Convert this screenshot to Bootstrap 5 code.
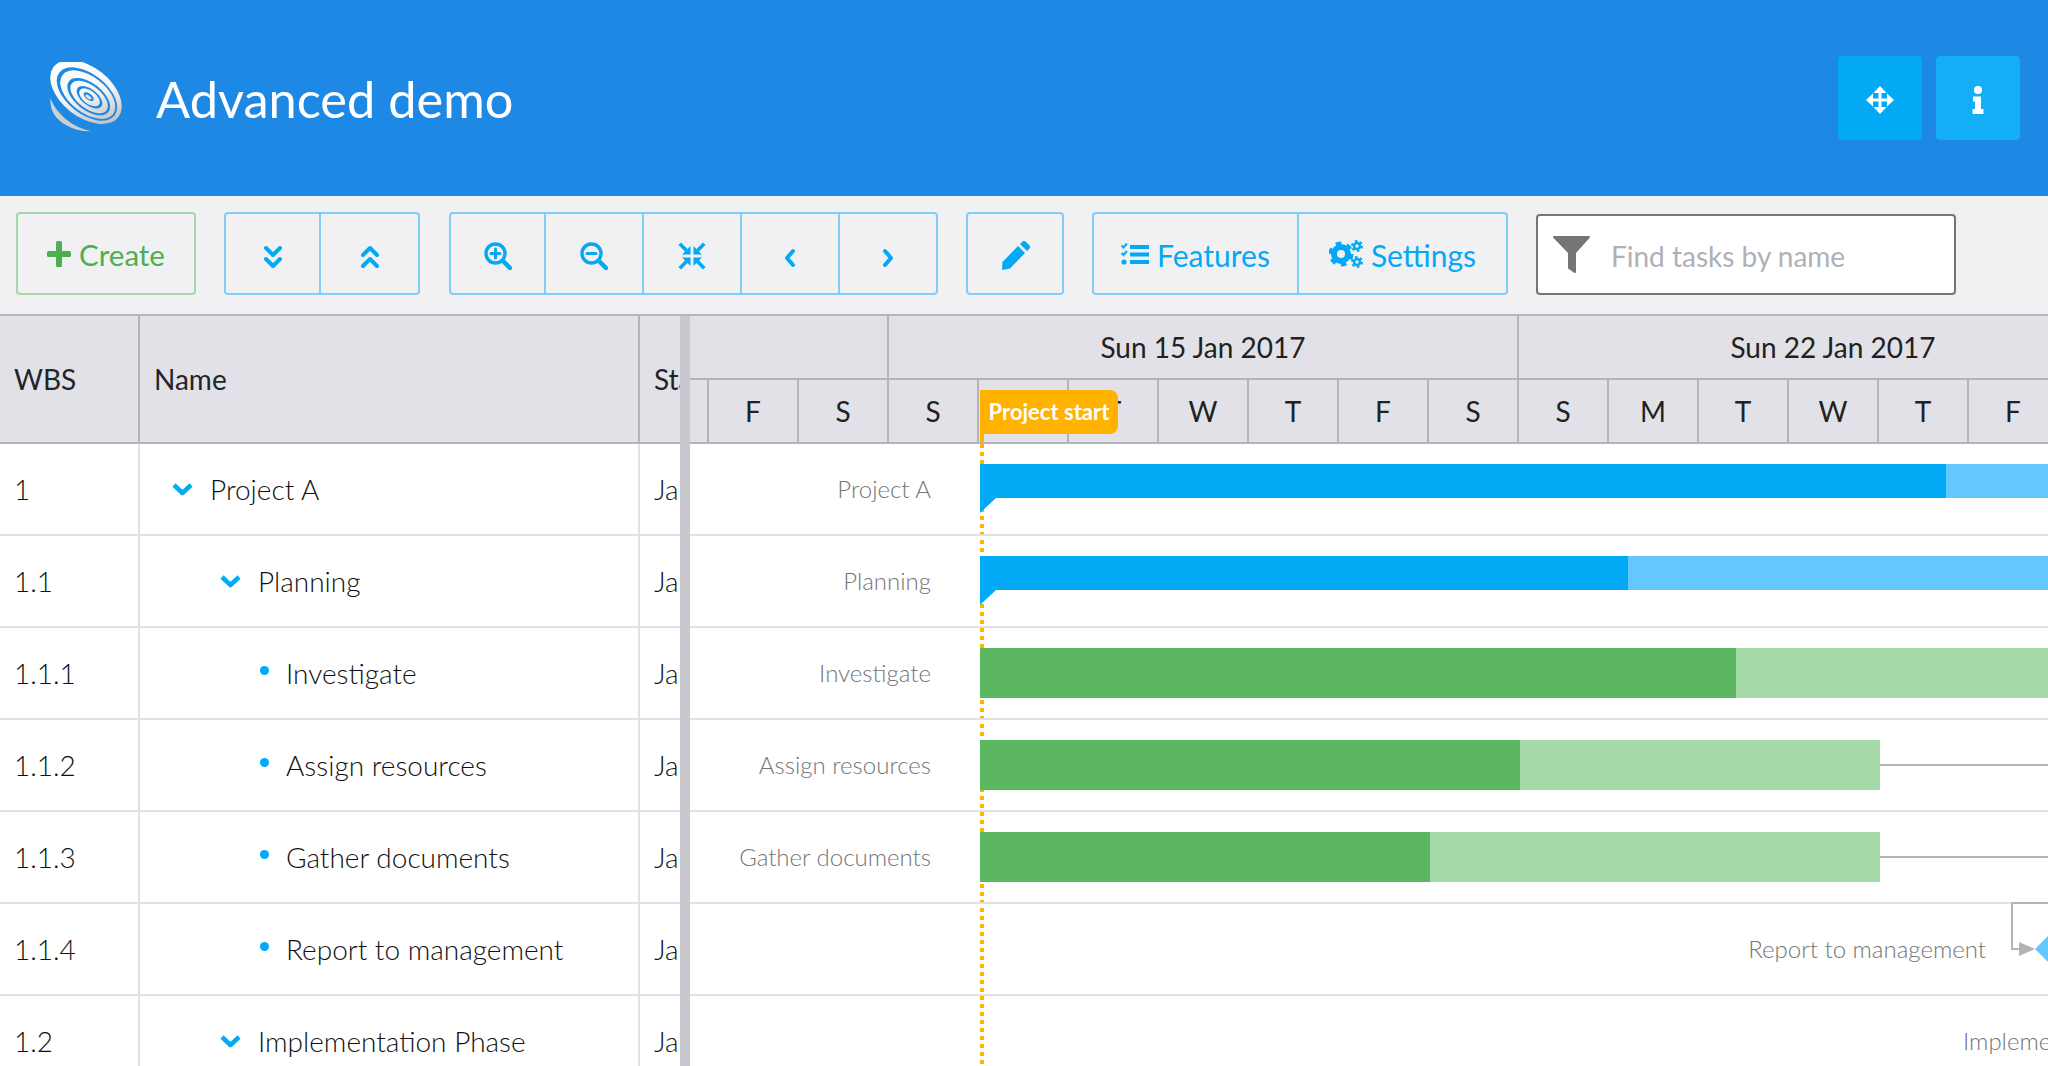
<!DOCTYPE html>
<html lang="en">

<head>
    <meta charset="UTF-8">
    <meta name="viewport" content="width=device-width, initial-scale=1.0">
    <title>Advanced demo</title>
    <link rel="stylesheet" href="https://cdn.jsdelivr.net/npm/bootstrap@5.3.0/dist/css/bootstrap.min.css">
    <style>
        html, body {
            height: 100%;
            overflow: hidden;
        }

        body {
            font-family: Lato, "Liberation Sans", sans-serif;
            color: #212121;
            background: #fff;
        }

        /* page header */
        .demo-head {
            height: 196px;
            background: #1e88e5;
            padding: 0 28px 0 50px;
        }

        .demo-title {
            font-size: 50.5px;
            font-weight: 400;
            color: #fff;
            margin: 2px 0 0 34px;
            line-height: 1;
        }

        .head-actions {
            gap: 14px;
        }

        .head-btn {
            width: 84px;
            height: 84px;
            padding: 3px 0 0;
            background: #03a9f4;
            border: 0;
            border-radius: 4px;
        }

        .head-btn + .head-btn {
            background: #13aef6;
        }

        /* toolbar */
        .tool-strip {
            height: 118px;
            background: #f1f1f4;
            padding: 16px 0 0 16px;
        }

        .btn-group {
            --bs-border-width: 0px;
        }

        .tool-btn {
            height: 83px;
            padding: 0;
            font-size: 30px;
            line-height: 1;
            color: #03a9f4;
            background: transparent;
            border: 2px solid #81cdf8;
            border-radius: 4px;
        }

        .btn-group > .tool-btn:not(:first-child) {
            border-left-width: 0;
        }

        .tool-btn:hover {
            color: #03a9f4;
            background: transparent;
            border-color: #81cdf8;
        }

        .tool-txt {
            padding-top: 2px;
        }

        .w-create { width: 180px; margin-right: 28px; color: #4caf50; border-color: #a5d6a7; font-size: 29.5px; }
        .w-create:hover { color: #4caf50; border-color: #a5d6a7; }
        .w-square { width: 98px; }
        .w-first { width: 97px; }
        .w-last { width: 99px; }
        .w-features { width: 207px; }
        .w-settings { width: 209px; }
        .gap-a { margin-right: 29px; }
        .gap-c { margin-right: 28px; }

        .filter-box {
            width: 420px;
            height: 81px;
            margin: 2px 0 0 28px;
            background: #fff;
            border: 2px solid #757575;
            border-radius: 4px;
            padding-left: 15px;
        }

        .filter-box input {
            border: 0;
            outline: 0;
            flex: 1;
            min-width: 0;
            margin-left: 21px;
            padding: 2px 0 0;
            font-size: 28px;
            font-family: inherit;
            color: #212121;
        }

        .filter-box input::placeholder {
            color: #b0b0b8;
            opacity: 1;
        }

        /* gantt */
        .gantt-wrap {
            height: 752px;
            border-top: 2px solid #b4b4ba;
            overflow: hidden;
        }

        .grid-pane {
            width: 680px;
            flex: none;
            overflow: hidden;
        }

        .split-bar {
            width: 10px;
            flex: none;
            background: #c8c8ce;
        }

        .time-pane {
            flex: 1;
            min-width: 0;
            overflow: hidden;
        }

        .tree-table {
            width: 800px;
            table-layout: fixed;
            margin: 0;
            border-collapse: separate;
            border-spacing: 0;
            --bs-table-bg: transparent;
        }

        .col-wbs { width: 140px; }
        .col-title { width: 500px; }
        .col-start { width: 160px; }

        .tree-table th,
        .tree-table td {
            padding: 0 0 0 14px;
            white-space: nowrap;
            overflow: hidden;
            font-size: 28px;
            vertical-align: middle;
            box-sizing: border-box;
            border: 0;
        }

        .tree-table th {
            height: 128px;
            background: #e1e1e7;
            font-weight: 400;
            border-right: 2px solid #b4b4ba;
            border-bottom: 2px solid #b4b4ba;
        }

        .tree-table td {
            height: 92px;
            font-weight: 300;
            color: #111;
            border-right: 2px solid #e1e1e7;
            border-bottom: 2px solid #e1e1e7;
        }

        .cell-name {
            display: flex;
            align-items: center;
        }

        .tree-table td.lvl-0 { padding-left: 32px; }
        .tree-table td.lvl-1 { padding-left: 80px; }
        .tree-table td.lvl-2 { padding-left: 120px; }

        .tree-dot {
            width: 9px;
            height: 9px;
            border-radius: 50%;
            background: #03a9f4;
            margin: -6px 17px 0 0;
            flex: none;
        }

        .tree-arrow {
            margin-right: 17px;
            flex: none;
        }

        /* timeline head */
        .scale-row {
            display: flex;
            background: #e1e1e7;
            width: 1500px;
        }

        .scale-top {
            height: 64px;
            border-bottom: 2px solid #b4b4ba;
        }

        .scale-days {
            height: 64px;
            border-bottom: 2px solid #b4b4ba;
        }

        .scale-cell {
            flex: none;
            display: flex;
            align-items: center;
            justify-content: center;
            font-size: 28px;
            border-right: 2px solid #b4b4ba;
            box-sizing: border-box;
        }

        .w-stub-top { width: 199px; }
        .w-week { width: 630px; }
        .w-stub-day { width: 19px; }
        .w-day { width: 90px; }

        .time-body {
            position: relative;
        }

        .time-row {
            position: relative;
            height: 92px;
            border-bottom: 2px solid #e1e1e7;
            box-sizing: border-box;
        }

        .task-label {
            position: absolute;
            top: 0;
            height: 90px;
            display: flex;
            align-items: center;
            font-size: 24px;
            font-weight: 300;
            color: #757575;
            white-space: nowrap;
        }

        .task-bar {
            position: absolute;
            top: 20px;
            height: 34px;
            display: flex;
        }

        .bar-leaf {
            height: 50px;
        }

        .bar-done, .bar-rest {
            height: 100%;
            flex: none;
        }

        .tone-blue .bar-done { background: #03a9f4; }
        .tone-blue .bar-rest { background: #62c8fd; }
        .tone-green .bar-done { background: #5cb860; }
        .tone-green .bar-rest { background: #a5d9a7; }

        .bar-notch {
            position: absolute;
            left: 0;
            top: 34px;
        }

        .link-line {
            position: absolute;
            height: 2px;
            background: #b4b4b4;
        }

        .link-shape {
            position: absolute;
            left: 0;
            top: 0;
            overflow: visible;
        }

        .project-line {
            position: absolute;
            left: 290px;
            top: 0;
            bottom: 0;
            width: 4px;
            background: repeating-linear-gradient(to bottom, #ffb300 0 4px, transparent 4px 8px);
        }

        .project-flag {
            position: absolute;
            left: 290px;
            top: 74px;
            width: 138px;
            height: 44px;
            background: #ffb300;
            color: #fff;
            font-size: 22px;
            font-weight: 700;
            line-height: 44px;
            text-align: center;
            white-space: nowrap;
            border-radius: 0 8px 8px 0;
        }

        /* stem of the flag, down to the grid line */
        .project-flag::after {
            content: "";
            position: absolute;
            left: 0;
            top: 44px;
            width: 4px;
            height: 8px;
            background: #ffb300;
        }

        .time-pane-inner {
            position: relative;
        }
    </style>
</head>

<body>
    <header class="demo-head d-flex align-items-center">
        <svg width="72" height="72" viewBox="0 0 72 72">
            <defs>
                <linearGradient id="logoFill" gradientUnits="userSpaceOnUse" x1="10" y1="5" x2="70" y2="45">
                    <stop offset="0" stop-color="#ffffff" />
                    <stop offset="0.55" stop-color="#f4f4f4" />
                    <stop offset="1" stop-color="#c0c0c0" />
                </linearGradient>
            </defs>
            <path d="M0.500 36C5 50 22 66 41 69 30 70 16 66 6 55 2 50 0 44 0.500 36z" fill="#cfcfcf" />
            <g transform="rotate(38 36 30)">
                <ellipse cx="36" cy="30" rx="41" ry="25" fill="url(#logoFill)" />
                <ellipse cx="38" cy="31" rx="35" ry="20" fill="#1e88e5" />
                <ellipse cx="39" cy="31" rx="32" ry="18" fill="url(#logoFill)" />
                <ellipse cx="41" cy="32" rx="25" ry="13.500" fill="#1e88e5" />
                <ellipse cx="41.500" cy="32" rx="22" ry="11.500" fill="url(#logoFill)" />
                <ellipse cx="42" cy="32" rx="15" ry="8" fill="#1e88e5" />
                <ellipse cx="42" cy="32" rx="12" ry="6.500" fill="url(#logoFill)" />
                <ellipse cx="41" cy="32" rx="6" ry="3" fill="#1e88e5" />
                <ellipse cx="41" cy="32.500" rx="3.500" ry="1.500" fill="#e4e4e4" />
            </g>
        </svg>
        <h1 class="demo-title">Advanced demo</h1>
        <div class="ms-auto d-flex head-actions">
            <button class="head-btn d-flex align-items-center justify-content-center" type="button" aria-label="Move">
                <svg width="28" height="28" viewBox="0 0 28 28" fill="#fff">
                    <path d="M14 0l6.500 7H15.500v5.500H21V7.500l7 6.500-7 6.500V15.500H15.500V21h5L14 28l-6.500-7h5V15.500H7v5L0 14l7-6.500v5h5.500V7h-5z" />
                </svg>
            </button>
            <button class="head-btn d-flex align-items-center justify-content-center" type="button" aria-label="Info">
                <svg width="12" height="28" viewBox="0 0 12 28" fill="#fff">
                    <circle cx="6" cy="4" r="4" />
                    <path d="M1 10.500h8v12.500h2.500v5H0.500v-5H3v-7.500H1z" />
                </svg>
            </button>
        </div>
    </header>

    <div class="tool-strip d-flex align-items-start">
        <button class="btn tool-btn w-create d-flex align-items-center justify-content-center" type="button">
            <svg class="me-2" width="24" height="28" viewBox="0 0 24 28" fill="#4caf50">
                <rect x="9" y="1" width="6" height="26" rx="1.500" />
                <rect x="0" y="11" width="24" height="6" rx="1.500" />
            </svg>
            <span class="tool-txt">Create</span>
        </button>

        <div class="btn-group gap-a">
            <button class="btn tool-btn w-first" type="button" aria-label="Expand all">
                <svg width="18" height="24" viewBox="0 0 18 24" fill="none" stroke="#03a9f4" stroke-width="4" stroke-linecap="round" stroke-linejoin="round">
                    <path d="M2 3l7 7 7-7M2 14l7 7 7-7" />
                </svg>
            </button>
            <button class="btn tool-btn w-last" type="button" aria-label="Collapse all">
                <svg width="18" height="24" viewBox="0 0 18 24" fill="none" stroke="#03a9f4" stroke-width="4" stroke-linecap="round" stroke-linejoin="round">
                    <path d="M2 10l7-7 7 7M2 21l7-7 7 7" />
                </svg>
            </button>
        </div>

        <div class="btn-group gap-c">
            <button class="btn tool-btn w-first" type="button" aria-label="Zoom in">
                <svg width="28" height="28" viewBox="0 0 28 28" fill="none" stroke="#03a9f4" stroke-width="3.500" stroke-linecap="round">
                    <circle cx="11.500" cy="11.500" r="9.500" />
                    <path d="M19 19l7 7" stroke-width="4.500" />
                    <path d="M7 11.500h9M11.500 7v9" stroke-width="3" />
                </svg>
            </button>
            <button class="btn tool-btn w-square" type="button" aria-label="Zoom out">
                <svg width="28" height="28" viewBox="0 0 28 28" fill="none" stroke="#03a9f4" stroke-width="3.500" stroke-linecap="round">
                    <circle cx="11.500" cy="11.500" r="9.500" />
                    <path d="M19 19l7 7" stroke-width="4.500" />
                    <path d="M7 11.500h9" stroke-width="3" />
                </svg>
            </button>
            <button class="btn tool-btn w-square" type="button" aria-label="Fit">
                <svg width="28" height="28" viewBox="0 0 28 28" fill="#03a9f4">
                    <path d="M12.500 12.500H4l3-3L0.500 3 3 0.500 9.500 7l3-3zM15.500 12.500H24l-3-3L27.500 3 25 0.500 18.500 7l-3-3zM12.500 15.500H4l3 3L0.500 25 3 27.500 9.500 21l3 3zM15.500 15.500H24l-3 3L27.500 25 25 27.500 18.500 21l-3 3z" />
                </svg>
            </button>
            <button class="btn tool-btn w-square" type="button" aria-label="Previous">
                <svg width="12" height="20" viewBox="0 0 12 20" fill="none" stroke="#03a9f4" stroke-width="4" stroke-linecap="round" stroke-linejoin="round">
                    <path d="M9 3l-6 7 6 7" />
                </svg>
            </button>
            <button class="btn tool-btn w-square" type="button" aria-label="Next">
                <svg width="12" height="20" viewBox="0 0 12 20" fill="none" stroke="#03a9f4" stroke-width="4" stroke-linecap="round" stroke-linejoin="round">
                    <path d="M3 3l6 7-6 7" />
                </svg>
            </button>
        </div>

        <button class="btn tool-btn w-square gap-c" type="button" aria-label="Edit">
            <svg width="29" height="29" viewBox="0 0 29 29" fill="#03a9f4">
                <path d="M17 5l7 7L9 27.500 1 29l0.500-8zM19 3l2.500-2.500c1-1 2-1 3 0l4 4c1 1 1 2 0 3L26 10z" />
            </svg>
        </button>

        <div class="btn-group">
            <button class="btn tool-btn w-features d-flex align-items-center justify-content-center" type="button">
                <svg class="me-2" width="28" height="24" viewBox="0 0 28 24" fill="#03a9f4">
                    <path d="M9 3h19v4H9zM9 10.500h19v4H9zM9 18h19v4H9z" />
                    <path d="M0.500 3.500l2 2L6 1.500M0.500 11l2 2L6 9" fill="none" stroke="#03a9f4" stroke-width="2" />
                    <circle cx="3" cy="20" r="2.600" />
                </svg>
                <span class="tool-txt">Features</span>
            </button>
            <button class="btn tool-btn w-settings d-flex align-items-center justify-content-center" type="button">
                <svg class="me-2" width="34" height="28" viewBox="0 0 34 28">
                    <g fill="none" stroke="#03a9f4">
                        <circle cx="12" cy="14" r="7" stroke-width="6" />
                        <circle cx="12" cy="14" r="10.500" stroke-width="4" stroke-dasharray="5.500 5.500" />
                        <circle cx="28" cy="6" r="3" stroke-width="2.500" />
                        <circle cx="28" cy="6" r="5" stroke-width="2" stroke-dasharray="2.600 2.600" />
                        <circle cx="28" cy="22" r="3" stroke-width="2.500" />
                        <circle cx="28" cy="22" r="5" stroke-width="2" stroke-dasharray="2.600 2.600" />
                    </g>
                </svg>
                <span class="tool-txt">Settings</span>
            </button>
        </div>

        <div class="filter-box d-flex align-items-center">
            <svg width="37" height="37" viewBox="0 0 37 37" fill="#757575">
                <path d="M1 0h35c1 0 1.300 1 0.700 1.700L23 17v19c0 1-1 1.300-1.800 0.800L15 32.500V17L0.300 1.700C-0.300 1 0 0 1 0z" />
            </svg>
            <input type="text" placeholder="Find tasks by name" aria-label="Find tasks by name">
        </div>
    </div>

    <div class="gantt-wrap d-flex">
        <div class="grid-pane">
            <table class="table tree-table">
                <colgroup>
                    <col class="col-wbs">
                    <col class="col-title">
                    <col class="col-start">
                </colgroup>
                <thead>
                    <tr>
                        <th>WBS</th>
                        <th>Name</th>
                        <th>Start</th>
                    </tr>
                </thead>
                <tbody>
                    <tr>
                        <td>1</td>
                        <td class="lvl-0">
                            <div class="cell-name">
                                <svg class="tree-arrow" width="21" height="14" viewBox="0 0 21 14" fill="none" stroke="#03a9f4" stroke-width="4.500" stroke-linejoin="round"><path d="M2 3l8.500 8L19 3" /></svg>
                                Project A
                            </div>
                        </td>
                        <td>Jan 16, 2017</td>
                    </tr>
                    <tr>
                        <td>1.1</td>
                        <td class="lvl-1">
                            <div class="cell-name">
                                <svg class="tree-arrow" width="21" height="14" viewBox="0 0 21 14" fill="none" stroke="#03a9f4" stroke-width="4.500" stroke-linejoin="round"><path d="M2 3l8.500 8L19 3" /></svg>
                                Planning
                            </div>
                        </td>
                        <td>Jan 16, 2017</td>
                    </tr>
                    <tr>
                        <td>1.1.1</td>
                        <td class="lvl-2"><div class="cell-name"><span class="tree-dot"></span>Investigate</div></td>
                        <td>Jan 16, 2017</td>
                    </tr>
                    <tr>
                        <td>1.1.2</td>
                        <td class="lvl-2"><div class="cell-name"><span class="tree-dot"></span>Assign resources</div></td>
                        <td>Jan 16, 2017</td>
                    </tr>
                    <tr>
                        <td>1.1.3</td>
                        <td class="lvl-2"><div class="cell-name"><span class="tree-dot"></span>Gather documents</div></td>
                        <td>Jan 16, 2017</td>
                    </tr>
                    <tr>
                        <td>1.1.4</td>
                        <td class="lvl-2"><div class="cell-name"><span class="tree-dot"></span>Report to management</div></td>
                        <td>Jan 27, 2017</td>
                    </tr>
                    <tr>
                        <td>1.2</td>
                        <td class="lvl-1">
                            <div class="cell-name">
                                <svg class="tree-arrow" width="21" height="14" viewBox="0 0 21 14" fill="none" stroke="#03a9f4" stroke-width="4.500" stroke-linejoin="round"><path d="M2 3l8.500 8L19 3" /></svg>
                                Implementation Phase
                            </div>
                        </td>
                        <td>Jan 27, 2017</td>
                    </tr>
                </tbody>
            </table>
        </div>

        <div class="split-bar"></div>

        <div class="time-pane">
            <div class="time-pane-inner">
                <div class="scale-row scale-top">
                    <div class="scale-cell w-stub-top"></div>
                    <div class="scale-cell w-week">Sun 15 Jan 2017</div>
                    <div class="scale-cell w-week">Sun 22 Jan 2017</div>
                </div>
                <div class="scale-row scale-days">
                    <div class="scale-cell w-stub-day"></div>
                    <div class="scale-cell w-day">F</div>
                    <div class="scale-cell w-day">S</div>
                    <div class="scale-cell w-day">S</div>
                    <div class="scale-cell w-day">M</div>
                    <div class="scale-cell w-day">T</div>
                    <div class="scale-cell w-day">W</div>
                    <div class="scale-cell w-day">T</div>
                    <div class="scale-cell w-day">F</div>
                    <div class="scale-cell w-day">S</div>
                    <div class="scale-cell w-day">S</div>
                    <div class="scale-cell w-day">M</div>
                    <div class="scale-cell w-day">T</div>
                    <div class="scale-cell w-day">W</div>
                    <div class="scale-cell w-day">T</div>
                    <div class="scale-cell w-day">F</div>
                    <div class="scale-cell w-day">S</div>
                </div>

                <div class="time-body">
                    <div class="project-line"></div>
                    <div class="time-row">
                        <span class="task-label" style="right:1117px">Project A</span>
                        <div class="task-bar tone-blue" style="left:290px;width:1068px">
                            <div class="bar-done" style="width:966px"></div>
                            <div class="bar-rest" style="width:102px"></div>
                            <svg class="bar-notch" width="17" height="16"><polygon points="0,0 16,0 0,15" fill="#03a9f4" /></svg>
                        </div>
                    </div>
                    <div class="time-row">
                        <span class="task-label" style="right:1117px">Planning</span>
                        <div class="task-bar tone-blue" style="left:290px;width:1068px">
                            <div class="bar-done" style="width:648px"></div>
                            <div class="bar-rest" style="width:420px"></div>
                            <svg class="bar-notch" width="17" height="16"><polygon points="0,0 16,0 0,15" fill="#03a9f4" /></svg>
                        </div>
                    </div>
                    <div class="time-row">
                        <span class="task-label" style="right:1117px">Investigate</span>
                        <div class="task-bar bar-leaf tone-green" style="left:290px;width:1068px">
                            <div class="bar-done" style="width:756px"></div>
                            <div class="bar-rest" style="width:312px"></div>
                        </div>
                    </div>
                    <div class="time-row">
                        <span class="task-label" style="right:1117px">Assign resources</span>
                        <div class="task-bar bar-leaf tone-green" style="left:290px;width:900px">
                            <div class="bar-done" style="width:540px"></div>
                            <div class="bar-rest" style="width:360px"></div>
                        </div>
                        <div class="link-line" style="left:1190px;top:44px;width:168px"></div>
                    </div>
                    <div class="time-row">
                        <span class="task-label" style="right:1117px">Gather documents</span>
                        <div class="task-bar bar-leaf tone-green" style="left:290px;width:900px">
                            <div class="bar-done" style="width:450px"></div>
                            <div class="bar-rest" style="width:450px"></div>
                        </div>
                        <div class="link-line" style="left:1190px;top:44px;width:168px"></div>
                    </div>
                    <div class="time-row">
                        <span class="task-label" style="right:62px">Report to management</span>
                        <svg class="link-shape" width="1358" height="90">
                            <path d="M1358 -1H1322V45H1330" fill="none" stroke="#b4b4b4" stroke-width="2" />
                            <polygon points="1329,38 1345,45 1329,52" fill="#b4b4b4" />
                            <polygon points="1345,45 1372,18 1399,45 1372,72" fill="#62c8fd" />
                        </svg>
                    </div>
                    <div class="time-row">
                        <span class="task-label" style="left:1273px">Implementation Phase</span>
                    </div>
                </div>
                <div class="project-flag">Project start</div>
            </div>
        </div>
    </div>

    <script src="https://cdn.jsdelivr.net/npm/bootstrap@5.3.0/dist/js/bootstrap.bundle.min.js"></script>
</body>

</html>
